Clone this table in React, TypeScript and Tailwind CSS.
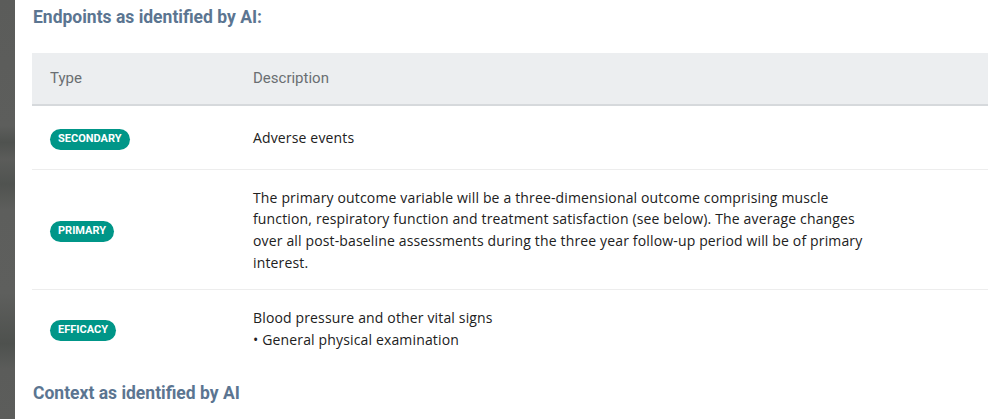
import React from "react";

const rows = [
  { type: "SECONDARY", lines: ["Adverse events"], h: "h-[64px]" },
  {
    type: "PRIMARY",
    lines: [
      "The primary outcome variable will be a three-dimensional outcome comprising muscle function, respiratory function and treatment satisfaction (see below). The average changes over all post-baseline assessments during the three year follow-up period will be of primary interest.",
    ],
    h: "",
  },
  {
    type: "EFFICACY",
    lines: ["Blood pressure and other vital signs", "\u2022 General physical examination"],
    h: "",
  },
];

export default function App() {
  return (
    <div className="flex w-[988px] h-[419px] overflow-hidden bg-white">
      <div className="w-[15px] shrink-0 bg-[linear-gradient(180deg,#5b5c5a_0%,#5d5e5c_30%,#4f524f_34%,#5b5c5a_38%,#505350_44%,#5d5e5c_50%,#5e5f5d_70%,#4e514e_82%,#5b5c5a_88%,#5c5d5b_100%)]" />
      <div className="flex-1 min-w-0 pl-[17px] pt-[4px] font-['Roboto',sans-serif]">
        <h2 className="text-[17.5px] leading-[27px] font-bold text-[#5b7591] pl-px">
          Endpoints as identified by AI:
        </h2>
        <table className="w-full border-collapse mt-[22px]">
          <thead>
            <tr className="bg-[#eceef0] border-b-2 border-[#d6d9dc] h-[52px]">
              <th className="w-[221px] pl-[18px] text-left font-normal text-[15px] text-[#6a6e72]">Type</th>
              <th className="text-left font-normal text-[15px] text-[#6a6e72]">Description</th>
            </tr>
          </thead>
          <tbody>
            {rows.map((r, idx) => (
              <tr key={r.type} className={`${idx < rows.length - 1 ? "border-b border-[#ededed]" : ""} ${r.h}`}>
                <td className="pl-[18px] align-middle">
                  <span className="inline-flex items-center h-[21px] px-[8px] rounded-full bg-[#009688] text-white text-[11px] font-bold">
                    {r.type}
                  </span>
                </td>
                <td className="pt-[17px] pb-[16px] align-middle">
                  <div className="w-[612px] font-['Open_Sans',sans-serif] text-[14px] tracking-[0.15px] leading-[21.7px] text-[#212121]">
                    {r.lines.map((l, i) => (
                      <div key={i}>{l}</div>
                    ))}
                  </div>
                </td>
              </tr>
            ))}
          </tbody>
        </table>
        <h2 className="mt-[13px] text-[17.5px] leading-[27px] font-bold text-[#5b7591] pl-px">
          Context as identified by AI
        </h2>
      </div>
    </div>
  );
}
